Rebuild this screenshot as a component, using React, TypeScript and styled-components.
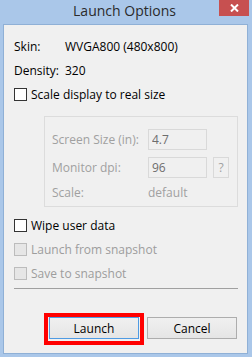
import React from "react";
import styled, { createGlobalStyle } from "styled-components";

const GlobalStyle = createGlobalStyle`
  html, body {
    margin: 0;
    padding: 0;
  }
  body {
    font-family: "Open Sans", "Liberation Sans", Arial, sans-serif;
    font-size: 12px;
    color: #000000;
    overflow: hidden;
  }
  * {
    box-sizing: border-box;
  }
`;

const Window = styled.div`
  width: 252px;
  height: 357px;
  display: flex;
  flex-direction: column;
  background: #aac7e9;
`;

const TitleBar = styled.div`
  height: 24px;
  display: grid;
  grid-template-columns: 1fr auto 1fr;
  padding-right: 3px;
`;

const Title = styled.div`
  grid-column: 2;
  font-size: 14px;
  line-height: 22px;
  color: #2b2b2b;
  white-space: nowrap;
`;

const CloseButton = styled.div`
  grid-column: 3;
  justify-self: end;
  width: 30px;
  height: 16px;
  background: #c75050;
  display: flex;
  align-items: center;
  justify-content: center;
`;

const Client = styled.div`
  flex: 1;
  margin: 0 4px 3px 3px;
  background: #f0f0f0;
  border: 1px solid #8fb0d6;
  padding: 9px 9px 0 10px;
  display: flex;
  flex-direction: column;
`;

const InfoRow = styled.div`
  height: 24px;
  display: flex;
  align-items: center;
  white-space: nowrap;
`;

const InfoLabel = styled.span`
  width: 51px;
  flex-shrink: 0;
`;

const CheckRow = styled.div<{ disabled?: boolean }>`
  height: 24px;
  display: flex;
  align-items: center;
  gap: 4px;
  white-space: nowrap;
  color: ${(p) => (p.disabled ? "#9d9d9d" : "#000000")};
`;

const CheckBox = styled.span<{ disabled?: boolean }>`
  width: 13px;
  height: 13px;
  flex-shrink: 0;
  border: 1px solid ${(p) => (p.disabled ? "#bcbcbc" : "#333333")};
  background: ${(p) => (p.disabled ? "#e6e6e6" : "#ffffff")};
`;

const GroupBox = styled.div`
  margin: 10px 0 0 30px;
  border: 1px solid #dcdcdc;
  padding: 12px 7px 6px 7px;
  display: flex;
  flex-direction: column;
  gap: 7px;
`;

const FieldRow = styled.div<{ compact?: boolean }>`
  height: ${(p) => (p.compact ? "16px" : "21px")};
  margin-top: ${(p) => (p.compact ? "-1px" : "0")};
  display: flex;
  align-items: center;
  color: #a0a0a0;
  white-space: nowrap;
`;

const FieldLabel = styled.span`
  width: 96px;
  flex-shrink: 0;
`;

const TextBox = styled.input`
  width: 59px;
  height: 21px;
  flex-shrink: 0;
  border: 1px solid #d9d9d9;
  background: #f0f0f0;
  padding: 0 3px;
  margin: 0;
  font-family: "Open Sans", "Liberation Sans", Arial, sans-serif;
  font-size: 12px;
  color: #6d6d6d;
  outline: none;
`;

const HelpButton = styled.div`
  width: 16px;
  height: 21px;
  margin-left: 6px;
  border: 1px solid #d9d9d9;
  display: flex;
  align-items: center;
  justify-content: center;
  color: #a0a0a0;
`;

const CheckList = styled.div`
  margin-top: 6px;
  display: flex;
  flex-direction: column;
`;

const Separator = styled.div`
  margin-top: 3px;
  height: 1px;
  background: #a0a0a0;
`;

const ButtonRow = styled.div`
  margin: 24px 1px 0 0;
  display: flex;
  justify-content: flex-end;
  align-items: flex-start;
  gap: 3px;
`;

const Highlight = styled.div`
  border: 4px solid #ff0000;
  padding: 0 1px 2px 1px;
`;

const Button = styled.button<{ primary?: boolean }>`
  width: 90px;
  height: 22px;
  margin: ${(p) => (p.primary ? "0" : "4px 0 0 0")};
  padding: 0;
  border: 1px solid ${(p) => (p.primary ? "#4f9be3" : "#adadad")};
  background: linear-gradient(#f0f0f0, #e5e5e5);
  font-family: "Open Sans", "Liberation Sans", Arial, sans-serif;
  font-size: 12px;
  color: #000000;
`;

const App = () => {
  return (
    <>
      <GlobalStyle />
      <Window>
        <TitleBar>
          <Title>Launch Options</Title>
          <CloseButton>
            <svg width="9" height="8" viewBox="0 0 9 8">
              <path d="M1 0.5 L8 7.5 M8 0.5 L1 7.5" stroke="#ffffff" strokeWidth="2" />
            </svg>
          </CloseButton>
        </TitleBar>
        <Client>
          <InfoRow>
            <InfoLabel>Skin:</InfoLabel>
            <span>WVGA800 (480x800)</span>
          </InfoRow>
          <InfoRow>
            <InfoLabel>Density:</InfoLabel>
            <span>320</span>
          </InfoRow>
          <CheckRow>
            <CheckBox />
            Scale display to real size
          </CheckRow>

          <GroupBox>
            <FieldRow>
              <FieldLabel>Screen Size (in):</FieldLabel>
              <TextBox disabled defaultValue="4.7" />
            </FieldRow>
            <FieldRow>
              <FieldLabel>Monitor dpi:</FieldLabel>
              <TextBox disabled defaultValue="96" />
              <HelpButton>?</HelpButton>
            </FieldRow>
            <FieldRow compact>
              <FieldLabel>Scale:</FieldLabel>
              <span>default</span>
            </FieldRow>
          </GroupBox>

          <CheckList>
            <CheckRow>
              <CheckBox />
              Wipe user data
            </CheckRow>
            <CheckRow disabled>
              <CheckBox disabled />
              Launch from snapshot
            </CheckRow>
            <CheckRow disabled>
              <CheckBox disabled />
              Save to snapshot
            </CheckRow>
          </CheckList>
          <Separator />

          <ButtonRow>
            <Highlight>
              <Button primary>Launch</Button>
            </Highlight>
            <Button>Cancel</Button>
          </ButtonRow>
        </Client>
      </Window>
    </>
  );
};

export default App;
